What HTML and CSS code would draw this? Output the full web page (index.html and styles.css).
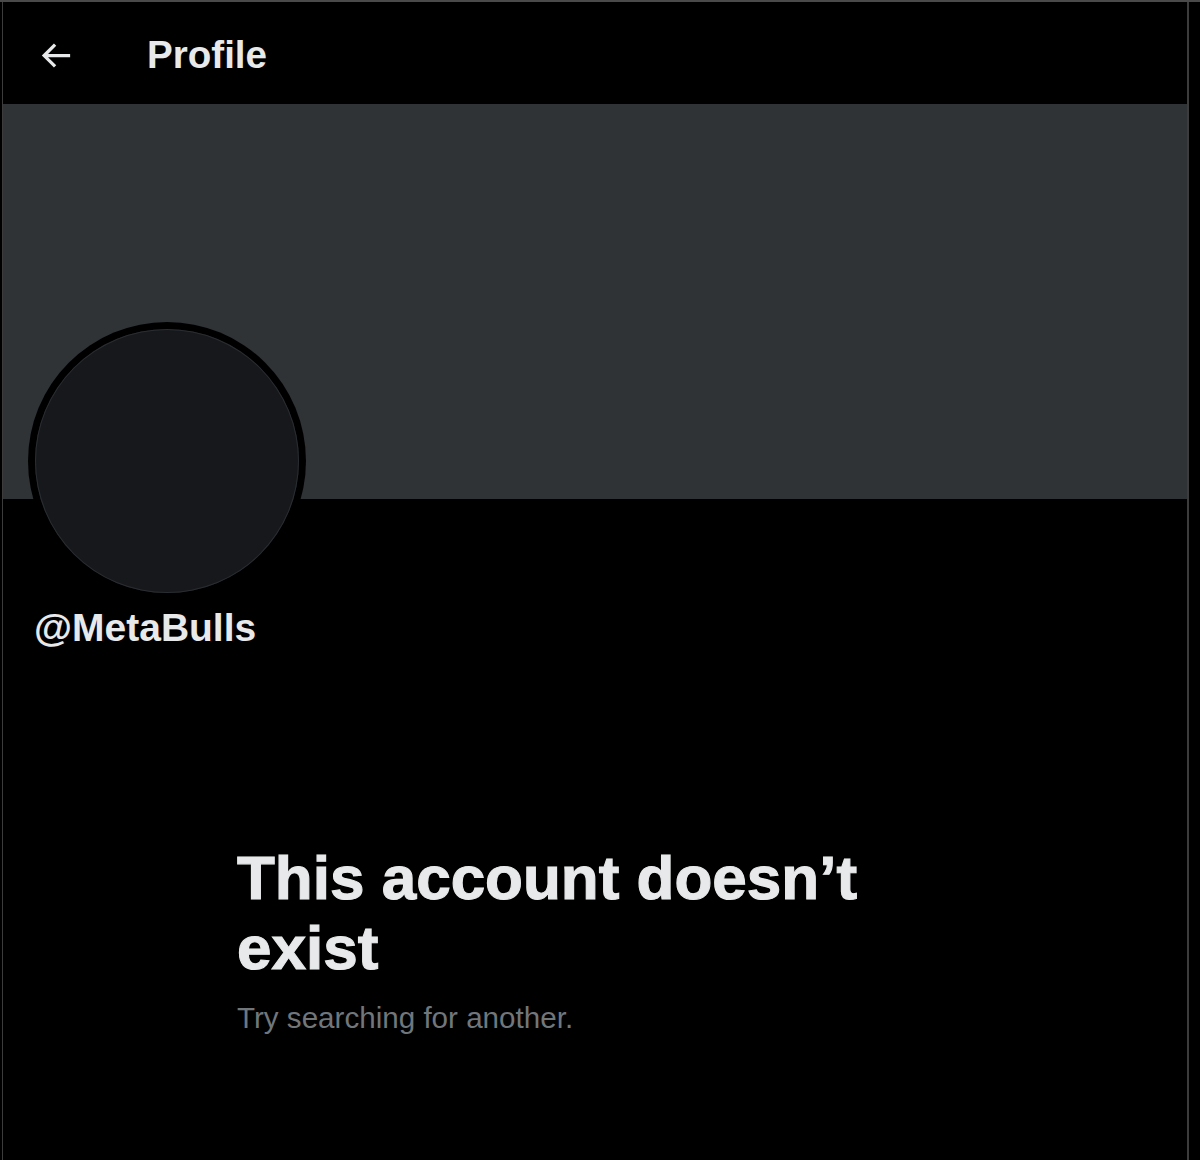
FILE: index.html
```html
<!DOCTYPE html>
<html lang="en">
<head>
<meta charset="utf-8">
<title>Profile</title>
<link rel="stylesheet" href="styles.css">
</head>
<body>
<div class="topline"></div>
<main class="column">
  <header class="header">
    <button class="back" aria-label="Back">
      <svg viewBox="0 0 24 24" class="back-icon"><path d="M7.414 13l5.043 5.04-1.414 1.42L3.586 12l7.457-7.46 1.414 1.42L7.414 11H21v2H7.414z"/></svg>
    </button>
    <h1 class="title">Profile</h1>
  </header>
  <div class="banner"></div>
  <section class="profile">
    <div class="avatar-ring"><div class="avatar"></div></div>
    <div class="handle">@MetaBulls</div>
  </section>
  <section class="empty">
    <h2 class="empty-title">This account doesn’t exist</h2>
    <p class="empty-sub">Try searching for another.</p>
  </section>
</main>
</body>
</html>
```
FILE: styles.css
```css
html, body {
  margin: 0;
  padding: 0;
  background: #000;
}
body {
  width: 1200px;
  height: 1160px;
  overflow: hidden;
  font-family: "Liberation Sans", Arial, sans-serif;
  color: #e7e9ea;
}
.topline {
  height: 2px;
  background: #4a4a4a;
}
.column {
  margin-left: 2px;
  width: 1184px;
  height: 1158px;
  border-left: 1px solid #3c3c3c;
  border-right: 2px solid #3c3c3c;
  display: flex;
  flex-direction: column;
}
.header {
  height: 102px;
  box-sizing: border-box;
  padding-top: 4px;
  display: flex;
  align-items: center;
}
.back {
  background: none;
  border: 0;
  padding: 0;
  margin-left: 33px;
  width: 39px;
  height: 39px;
  display: flex;
  align-items: center;
  justify-content: center;
}
.back-icon {
  width: 39px;
  height: 39px;
  fill: #e7e9ea;
}
.title {
  margin: 0 0 0 72px;
  font-size: 38.6px;
  line-height: 46px;
  font-weight: 700;
}
.banner {
  height: 395px;
  background: #2f3336;
}
.profile {
  display: flex;
  flex-direction: column;
  align-items: flex-start;
}
.avatar-ring {
  margin-top: -177px;
  margin-left: 25px;
  width: 278px;
  height: 278px;
  border-radius: 50%;
  background: #000;
  padding: 7px;
  box-sizing: border-box;
}
.avatar {
  width: 100%;
  height: 100%;
  border-radius: 50%;
  background: #16181c;
  box-shadow: inset 0 0 0 1px #2a2d31;
}
.handle {
  margin: 5px 0 0 31px;
  font-size: 39px;
  line-height: 46px;
  font-weight: 700;
}
.empty {
  width: 716px;
  margin: 192px auto 0;
}
.empty-title {
  margin: 0;
  font-size: 62px;
  line-height: 70px;
  font-weight: 700;
  -webkit-text-stroke: 1.1px #e7e9ea;
}
.empty-sub {
  margin: 17px 0 0;
  font-size: 29.6px;
  line-height: 36px;
  color: #71767b;
}
```
